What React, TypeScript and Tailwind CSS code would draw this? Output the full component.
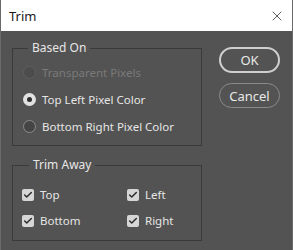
import { Check, X } from "lucide-react";

const font = { fontFamily: '"Noto Sans", "Open Sans", sans-serif' };

function Radio({ label, checked, disabled }: { label: string; checked?: boolean; disabled?: boolean }) {
  return (
    <label className="flex h-[27px] items-center gap-[6px]">
      {checked ? (
        <span className="flex h-[13px] w-[13px] items-center justify-center rounded-full bg-[#e2e2e2]">
          <span className="h-[5px] w-[5px] rounded-full bg-[#2e2e2e]" />
        </span>
      ) : (
        <span
          className={
            disabled
              ? "h-[13px] w-[13px] rounded-full border border-[#5f5f5f] bg-[#4c4c4c]"
              : "h-[13px] w-[13px] rounded-full border border-[#8c8c8c] bg-[#454545]"
          }
        />
      )}
      <span className={disabled ? "text-[#7a7a7a]" : "text-[#e6e6e6]"}>{label}</span>
    </label>
  );
}

function Box({ label }: { label: string }) {
  return (
    <label className="flex h-[26px] items-center gap-[6px]">
      <span className="flex h-[12px] w-[12px] items-center justify-center rounded-[2px] bg-[#d6d6d6]">
        <Check size={10} strokeWidth={3.5} className="text-[#2b2b2b]" />
      </span>
      <span className="text-[#e6e6e6]">{label}</span>
    </label>
  );
}

export default function App() {
  return (
    <div style={font} className="h-[250px] w-[293px] border-x border-[#6a6a6a] bg-[#535353] text-[11.5px] leading-[16px]">
      <div className="flex h-[31px] items-center justify-between bg-white pl-[8px] pr-[7px] text-[13px] text-[#1a1a1a]">
        <span>Trim</span>
        <X size={16} strokeWidth={1.1} className="text-[#222]" />
      </div>

      <div className="flex gap-[17px] pl-[11px] pt-[9px]">
        <div className="flex w-[190px] flex-col gap-[11px]">
          <fieldset className="border border-[#3a3a3a] pb-[5px] pl-[10px] pt-[3px]">
            <legend className="ml-[5px] px-[4px] text-[12px] text-[#e6e6e6]">Based On</legend>
            <Radio label="Transparent Pixels" disabled />
            <Radio label="Top Left Pixel Color" checked />
            <Radio label="Bottom Right Pixel Color" />
          </fieldset>

          <fieldset className="border border-[#3a3a3a] pb-[6px] pl-[9px] pt-[9px]">
            <legend className="ml-[7px] px-[4px] text-[12px] text-[#e6e6e6]">Trim Away</legend>
            <div className="grid grid-cols-[105px_1fr]">
              <Box label="Top" />
              <Box label="Left" />
              <Box label="Bottom" />
              <Box label="Right" />
            </div>
          </fieldset>
        </div>

        <div className="mt-[7px] flex w-[61px] flex-col gap-[10px] text-[13px] text-[#e8e8e8]">
          <button type="button" className="h-[26px] rounded-full border-2 border-[#cfcfcf]">
            OK
          </button>
          <button type="button" className="h-[25px] rounded-full border border-[#8a8a8a]">
            Cancel
          </button>
        </div>
      </div>
    </div>
  );
}
